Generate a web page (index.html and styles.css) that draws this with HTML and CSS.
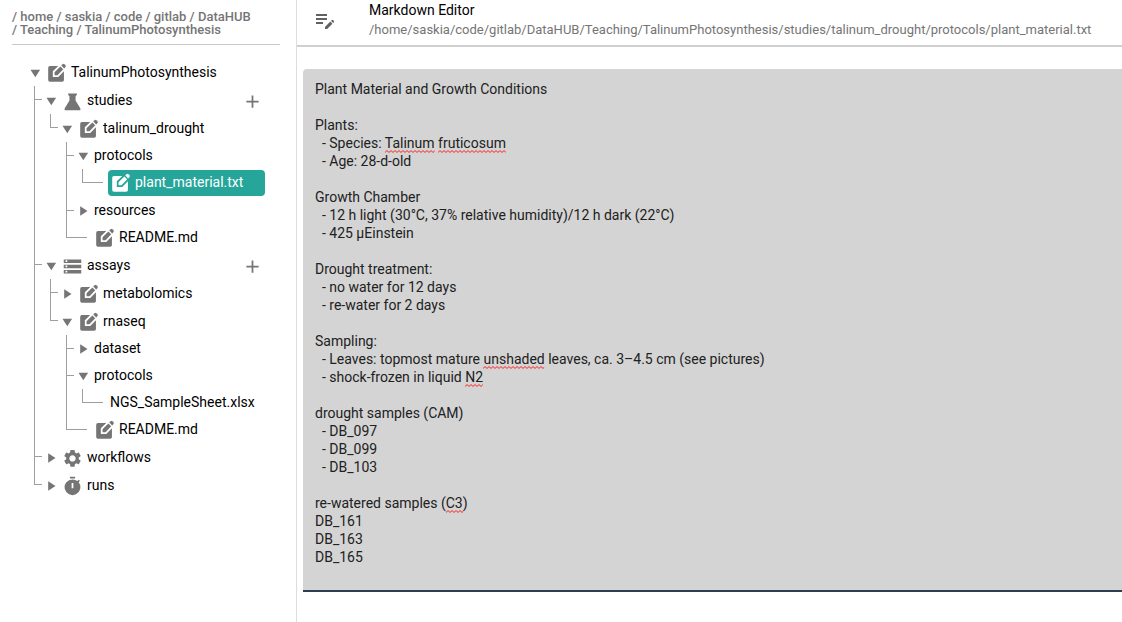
FILE: index.html
```html
<!DOCTYPE html>
<html lang="en">
<head>
<meta charset="utf-8">
<meta name="viewport" content="width=device-width, initial-scale=1">
<title>Markdown Editor</title>
<link rel="stylesheet" href="styles.css">
</head>
<body>
<svg class="sprite" aria-hidden="true">
  <symbol id="i-down" viewBox="0 0 14 14"><path d="M2.500 4.700h9.600L7.300 12.300z"/></symbol>
  <symbol id="i-right" viewBox="0 0 14 14"><path d="M4.200 3.200v9.600L11.500 8z"/></symbol>
  <symbol id="i-edit" viewBox="0 0 24 24"><path d="M4.500 4.500H14L7.800 10.700V17H14L20.500 10.500V20.500Q20.500 22.500 18.500 22.500H4.500Q2.500 22.500 2.500 20.500V6.500Q2.500 4.500 4.500 4.500z"/><path d="M9.800 11.700 16.400 5.100 19.700 8.400 13.100 15H9.800z"/><path d="M17.500 4 19 2.500Q20 1.700 21 2.500L22.300 3.800Q23.100 4.800 22.300 5.800L20.800 7.300z"/></symbol>
  <symbol id="i-flask" viewBox="0 0 24 24"><path d="M7 4h10v1.500l-1.500 1.500v5L21 21v2H3v-2l5.500-9V7L7 5.500z"/></symbol>
  <symbol id="i-storage" viewBox="0 0 24 24"><path d="M2 21h20v-4H2v4zm2-3h2v2H4v-2zM2 5v4h20V5H2zm4 3H4V6h2v2zm-4 7h20v-4H2v4zm2-3h2v2H4v-2z"/></symbol>
  <symbol id="i-gear" viewBox="0 -1 24 24"><path fill-rule="evenodd" d="M19.140 12.940c.04-.3.06-.61.06-.94 0-.32-.02-.64-.07-.94l2.030-1.580c.18-.14.23-.41.12-.61l-1.920-3.320c-.12-.22-.37-.29-.59-.22l-2.390.96c-.5-.38-1.030-.7-1.620-.94L14.400 2.810c-.04-.24-.24-.41-.48-.41h-3.840c-.24 0-.43.17-.47.41L9.250 5.350c-.59.24-1.130.57-1.620.94l-2.390-.96c-.22-.08-.47 0-.59.22L2.740 8.870c-.12.21-.08.47.12.61l2.030 1.580c-.05.3-.09.63-.09.94s.02.64.07.94l-2.030 1.580c-.18.14-.23.41-.12.61l1.920 3.320c.12.22.37.29.59.22l2.390-.96c.5.38 1.030.7 1.620.94l.36 2.540c.05.24.24.41.48.41h3.840c.24 0 .44-.17.47-.41l.36-2.540c.59-.24 1.130-.56 1.620-.94l2.390.96c.22.08.47 0 .59-.22l1.920-3.320c.12-.22.07-.47-.12-.61l-2.010-1.580zM12 15.600c-1.980 0-3.600-1.620-3.600-3.600s1.620-3.600 3.600-3.600 3.600 1.620 3.600 3.600-1.620 3.600-3.600 3.600z"/></symbol>
  <symbol id="i-timer" viewBox="0 -1 24 24"><path fill-rule="evenodd" d="M9 1h6v2H9zM19.030 7.390l1.420-1.420c-.43-.51-.9-.99-1.410-1.410l-1.420 1.420A8.960 8.960 0 0 0 12 4a9 9 0 1 0 7.030 3.390zM13 14h-2V8h2v6z"/></symbol>
  <symbol id="i-plus" viewBox="0 0 24 24"><path d="M19 14.200h-6v6h-2v-6H5v-2h6v-6h2v6h6v2z"/></symbol>
  <symbol id="i-note" viewBox="0 0 24 24"><path d="M3 10h11v2H3v-2zm0-2h11V6H3v2zm0 8h7v-2H3v2zm15.010-3.130.71-.71a.996.996 0 0 1 1.410 0l.71.71c.39.39.39 1.020 0 1.410l-.71.71-2.120-2.120zm-.71.71-5.300 5.300V21h2.120l5.300-5.300-2.120-2.120z"/></symbol>
</svg>
<div class="app">
  <aside class="sidebar">
    <div class="root-path">/ home / saskia / code / gitlab / DataHUB<br>/ Teaching / TalinumPhotosynthesis</div>
    <nav aria-label="Files">
      <ul class="tree">
        <li>
          <div class="row"><button class="node"><svg class="arrow"><use href="#i-down"/></svg><svg class="icon"><use href="#i-edit"/></svg>TalinumPhotosynthesis</button></div>
          <ul>
            <li>
              <div class="row"><button class="node"><svg class="arrow"><use href="#i-down"/></svg><svg class="icon"><use href="#i-flask"/></svg>studies</button><button class="add" aria-label="Add study"><svg class="icon"><use href="#i-plus"/></svg></button></div>
              <ul>
                <li>
                  <div class="row"><button class="node"><svg class="arrow"><use href="#i-down"/></svg><svg class="icon"><use href="#i-edit"/></svg>talinum_drought</button></div>
                  <ul>
                    <li>
                      <div class="row compact"><button class="node"><svg class="arrow"><use href="#i-down"/></svg>protocols</button></div>
                      <ul>
                        <li class="leaf"><div class="row"><button class="node selected"><svg class="icon"><use href="#i-edit"/></svg>plant_material.txt</button></div></li>
                      </ul>
                    </li>
                    <li><div class="row compact"><button class="node"><svg class="arrow"><use href="#i-right"/></svg>resources</button></div></li>
                    <li class="leaf"><div class="row compact"><button class="node"><svg class="icon"><use href="#i-edit"/></svg>README.md</button></div></li>
                  </ul>
                </li>
              </ul>
            </li>
            <li>
              <div class="row"><button class="node"><svg class="arrow"><use href="#i-down"/></svg><svg class="icon"><use href="#i-storage"/></svg>assays</button><button class="add" aria-label="Add assay"><svg class="icon"><use href="#i-plus"/></svg></button></div>
              <ul>
                <li><div class="row"><button class="node"><svg class="arrow"><use href="#i-right"/></svg><svg class="icon"><use href="#i-edit"/></svg>metabolomics</button></div></li>
                <li>
                  <div class="row"><button class="node"><svg class="arrow"><use href="#i-down"/></svg><svg class="icon"><use href="#i-edit"/></svg>rnaseq</button></div>
                  <ul>
                    <li><div class="row compact"><button class="node"><svg class="arrow"><use href="#i-right"/></svg>dataset</button></div></li>
                    <li>
                      <div class="row compact"><button class="node"><svg class="arrow"><use href="#i-down"/></svg>protocols</button></div>
                      <ul>
                        <li class="leaf"><div class="row compact"><button class="node">NGS_SampleSheet.xlsx</button></div></li>
                      </ul>
                    </li>
                    <li class="leaf"><div class="row compact"><button class="node"><svg class="icon"><use href="#i-edit"/></svg>README.md</button></div></li>
                  </ul>
                </li>
              </ul>
            </li>
            <li><div class="row"><button class="node"><svg class="arrow"><use href="#i-right"/></svg><svg class="icon"><use href="#i-gear"/></svg>workflows</button></div></li>
            <li><div class="row"><button class="node"><svg class="arrow"><use href="#i-right"/></svg><svg class="icon"><use href="#i-timer"/></svg>runs</button></div></li>
          </ul>
        </li>
      </ul>
    </nav>
  </aside>
  <main class="main">
    <header class="header">
      <svg class="header-icon" aria-hidden="true"><use href="#i-note"/></svg>
      <div class="titles">
        <label class="title" for="editor">Markdown Editor</label>
        <div class="path">/home/saskia/code/gitlab/DataHUB/Teaching/TalinumPhotosynthesis/studies/talinum_drought/protocols/plant_material.txt</div>
      </div>
    </header>
    <div class="field">
      <textarea class="text" id="editor" rows="27" spellcheck="false">Plant Material and Growth Conditions

Plants:
  - Species: Talinum fruticosum
  - Age: 28-d-old

Growth Chamber
  - 12 h light (30°C, 37% relative humidity)/12 h dark (22°C)
  - 425 µEinstein

Drought treatment:
  - no water for 12 days
  - re-water for 2 days

Sampling:
  - Leaves: topmost mature unshaded leaves, ca. 3–4.5 cm (see pictures)
  - shock-frozen in liquid N2

drought samples (CAM)
  - DB_097
  - DB_099
  - DB_103

re-watered samples (C3)
DB_161
DB_163
DB_165</textarea>
      <svg class="marks" aria-hidden="true">
        <pattern id="wave" width="4" height="4" patternUnits="userSpaceOnUse"><path d="M-1 2.500 0 3.500 2 1.500 4 3.500 5 2.500" class="wave"/></pattern>
        <g id="marks"></g>
      </svg>
    </div>
  </main>
</div>
<script src="spelling.js"></script>
</body>
</html>
```
FILE: spelling.js
```js
const editor = document.getElementById("editor");
const marks = document.getElementById("marks");
const unknown = /\b(Talinum|fruticosum|unshaded|N2|C3)\b/g;
const pen = document.createElement("canvas").getContext("2d");

function drawMarks() {
  const style = getComputedStyle(editor);
  const left = parseFloat(style.paddingLeft);
  const top = parseFloat(style.paddingTop);
  const lineHeight = parseFloat(style.lineHeight);
  pen.font = `${style.fontSize} ${style.fontFamily}`;
  marks.replaceChildren();

  editor.value.split("\n").forEach((line, row) => {
    for (const match of line.matchAll(unknown)) {
      const x = left + pen.measureText(line.slice(0, match.index)).width;
      const y = top + (row + 1) * lineHeight - 3;
      const rect = document.createElementNS("http://www.w3.org/2000/svg", "rect");
      rect.setAttribute("width", pen.measureText(match[0]).width);
      rect.setAttribute("height", 4);
      rect.setAttribute("fill", "url(#wave)");
      rect.setAttribute("transform", `translate(${Math.round(x)} ${y})`);
      marks.append(rect);
    }
  });
}

editor.addEventListener("input", drawMarks);
drawMarks();
```
FILE: styles.css
```css
* { box-sizing: border-box; }

body {
  margin: 0;
  font: 14px/18px Roboto, "Liberation Sans", sans-serif;
  color: #000;
  background: #fff;
}

ul { list-style: none; margin: 0; padding: 0; }
button { font: inherit; color: inherit; border: 0; background: none; padding: 0; cursor: pointer; }
svg { display: block; fill: #757575; flex: none; }
.sprite { display: none; }

.app { display: flex; min-height: 100vh; }

.sidebar {
  flex: 0 0 297px;
  padding: 10px 16px 16px 12px;
  border-right: 1px solid #ddd;
}
.root-path {
  padding-bottom: 8px;
  border-bottom: 1px solid #c8c8c8;
  font-size: 13px;
  line-height: 13px;
  font-weight: 500;
  color: #757575;
  white-space: nowrap;
}

.tree { padding: 13px 15px 0 16px; }
.tree ul { padding-left: 16px; }
.tree li { position: relative; }
.row { display: flex; align-items: center; height: 28px; }
.row.compact { align-items: flex-start; height: 27px; }
.node { display: flex; align-items: center; gap: 4px; flex: 1; height: 26px; white-space: nowrap; }
.arrow { width: 14px; height: 14px; }
.icon { width: 21px; height: 21px; }
.leaf .row { padding-left: 16px; }
.leaf .node { padding-left: 2px; border-radius: 4px; }
.leaf .selected { padding-bottom: 2px; background: #26a69a; color: #fff; }
.selected .icon { fill: #fff; }
.add { padding-right: 2px; }

/* Connector lines between a folder and its children */
.tree ul > li::before,
.tree ul > li::after {
  content: "";
  position: absolute;
  left: -10px;
}
.tree ul > li::before { top: 0; bottom: 0; border-left: 1px solid #9e9e9e; }
.tree ul > li:last-child::before { bottom: auto; height: 14px; }
.tree ul > li::after { top: 13px; width: 8px; border-top: 1px solid #9e9e9e; }
.tree ul > li.leaf::after { width: 21px; }

.main { flex: 1; min-width: 0; }
.header {
  display: flex;
  align-items: center;
  gap: 32px;
  padding: 0 16px 6px;
  border-bottom: 2px solid #d0d0d0;
}
.header-icon { width: 24px; height: 24px; fill: #616161; }
.titles { min-width: 0; }
.title { display: block; line-height: 20px; }
.path { font-size: 13px; line-height: 19px; color: #757575; }

.field {
  position: relative;
  margin: 22px 0 0 6px;
  background: #d4d4d4;
  border-bottom: 2px solid #2c3e50;
  border-radius: 4px 0 0 0;
}
.text {
  display: block;
  width: 100%;
  margin: 0;
  padding: 11px 12px 24px;
  border: 0;
  outline: 0;
  resize: none;
  overflow: hidden;
  background: transparent;
  color: #212121;
  font: inherit;
  white-space: pre;
}
.marks { position: absolute; inset: 0; width: 100%; height: 100%; pointer-events: none; }
.wave { fill: none; stroke: #ff1a1a; stroke-width: 1; }
```
